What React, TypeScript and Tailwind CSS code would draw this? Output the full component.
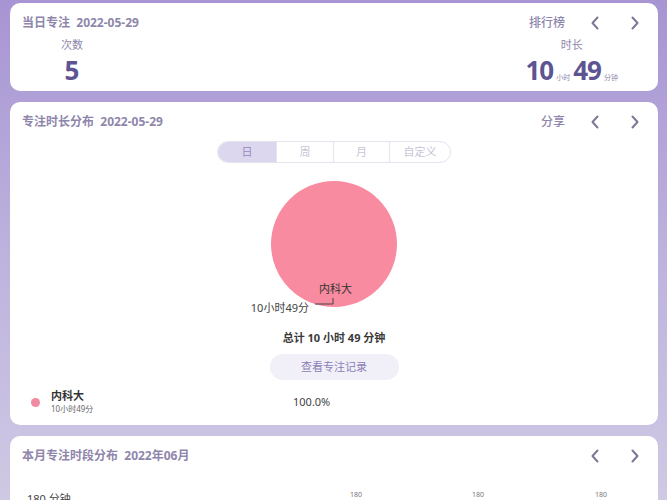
import React from 'react';

const font = { fontFamily: '"Noto Sans", "Noto Sans CJK SC", sans-serif' };

function Chevron({ dir }: { dir: 'left' | 'right' }) {
  return (
    <span className="w-[16px] h-[16px] flex items-center justify-center">
      <svg width="10" height="14" viewBox="0 0 10 14" fill="none">
        <path
          d={dir === 'left' ? 'M7.5 1.5 L2.5 7 L7.5 12.5' : 'M2.5 1.5 L7.5 7 L2.5 12.5'}
          stroke="#7d7896"
          strokeWidth="2"
          strokeLinecap="round"
          strokeLinejoin="round"
        />
      </svg>
    </span>
  );
}

function CardHeader({ title, date, action }: { title: string; date: string; action?: string }) {
  return (
    <div className="flex items-center justify-between h-[20px] pl-[12px] pr-[15px]">
      <div className="text-[12px] font-bold text-[#8e86ab] whitespace-pre">
        {title}  {date}
      </div>
      <div className="flex items-center">
        {action && <span className="text-[12px] text-[#8e86ab] font-medium mr-[22px]">{action}</span>}
        <Chevron dir="left" />
        <span className="w-[24px]" />
        <Chevron dir="right" />
      </div>
    </div>
  );
}

export default function App() {
  const tabs = ['日', '周', '月', '自定义'];

  return (
    <div
      style={font}
      className="w-[667px] h-[500px] overflow-hidden bg-gradient-to-b from-[#a794d3] via-[#bdb2dd] to-[#cfc9e4] pl-[10px] pr-[9px] pt-[3px] flex flex-col gap-[11px]"
    >
      {/* today */}
      <div className="bg-white rounded-[10px] h-[88px] pt-[10px] shrink-0">
        <CardHeader title="当日专注" date="2022-05-29" action="排行榜" />
        <div className="flex justify-between mt-[4px]">
          <div className="ml-[30px] w-[64px] flex flex-col items-center">
            <span className="text-[11px] text-[#8e86ab] leading-[16px]">次数</span>
            <span className="text-[26px] font-bold text-[#5d5592] leading-[32px] mt-[1px]">5</span>
          </div>
          <div className="mr-[40px] flex flex-col items-center">
            <span className="text-[11px] text-[#8e86ab] leading-[16px]">时长</span>
            <div className="flex items-baseline leading-[32px] mt-[1px] text-[#5d5592]">
              <span className="text-[26px] font-bold tracking-[-1px]">10</span>
              <span className="text-[7px] text-[#8e86ab] ml-[3px]">小时</span>
              <span className="text-[26px] font-bold tracking-[-1px] ml-[3px]">49</span>
              <span className="text-[7px] text-[#8e86ab] ml-[3px]">分钟</span>
            </div>
          </div>
        </div>
      </div>

      {/* distribution */}
      <div className="bg-white rounded-[10px] h-[323px] pt-[10px] shrink-0 flex flex-col">
        <CardHeader title="专注时长分布" date="2022-05-29" action="分享" />
        <div className="flex justify-center mt-[9px]">
          <div className="flex h-[22px] border border-[#e6e3ef] rounded-full overflow-hidden">
            {tabs.map((t, i) => (
              <div
                key={t}
                className={
                  (i === 0 ? 'bg-[#dcd7ee] text-[#958bbf] w-[58px] ' : 'text-[#cac5d8] ') +
                  (i === 1 ? 'w-[57px] ' : '') +
                  (i === 2 ? 'w-[56px] ' : '') +
                  (i === 3 ? 'w-[61px] ' : '') +
                  (i > 0 ? 'border-l border-[#e6e3ef] ' : '') +
                  'flex items-center justify-center text-[11px]'
                }
              >
                {t}
              </div>
            ))}
          </div>
        </div>

        <div className="flex justify-center mt-[13px]">
          <svg width="220" height="140" viewBox="0 0 220 140">
            <circle cx="110" cy="68" r="63" fill="#f88b9f" />
            <text x="95" y="117" fontSize="11" fill="#333" style={font}>内科大</text>
            <polyline points="91,128 109,128 109,122" fill="none" stroke="#444" strokeWidth="1" />
            <text x="85" y="136" fontSize="11" fill="#444" textAnchor="end" style={font}>10小时49分</text>
          </svg>
        </div>

        <div className="text-center text-[11px] font-bold text-[#3a3a3a] mt-[14px] leading-[16px]">
          总计 10 小时 49 分钟
        </div>
        <div className="flex justify-center mt-[8px]">
          <button className="w-[129px] h-[26px] rounded-full bg-[#f1eff7] text-[11px] text-[#8c80b8]">
            查看专注记录
          </button>
        </div>

        <div className="flex items-center mt-[9px] pl-[21px]">
          <span className="w-[9px] h-[9px] rounded-full bg-[#f18aa0]" />
          <div className="ml-[11px] w-[242px] flex flex-col">
            <span className="text-[11px] font-bold text-[#333] leading-[14px]">内科大</span>
            <span className="text-[8px] text-[#666] leading-[12px]">10小时49分</span>
          </div>
          <span className="text-[11px] text-[#444]">100.0%</span>
        </div>
      </div>

      {/* month */}
      <div className="bg-white rounded-[10px] h-[80px] pt-[10px] shrink-0">
        <CardHeader title="本月专注时段分布" date="2022年06月" />
        <div className="relative h-[40px]">
          <span className="absolute left-[17px] top-[26px] text-[11px] leading-[14px] text-[#444]">180 分钟</span>
          <span className="absolute left-[340px] top-[24px] text-[7px] text-[#777]">180</span>
          <span className="absolute left-[462px] top-[24px] text-[7px] text-[#777]">180</span>
          <span className="absolute left-[585px] top-[24px] text-[7px] text-[#777]">180</span>
        </div>
      </div>
    </div>
  );
}
